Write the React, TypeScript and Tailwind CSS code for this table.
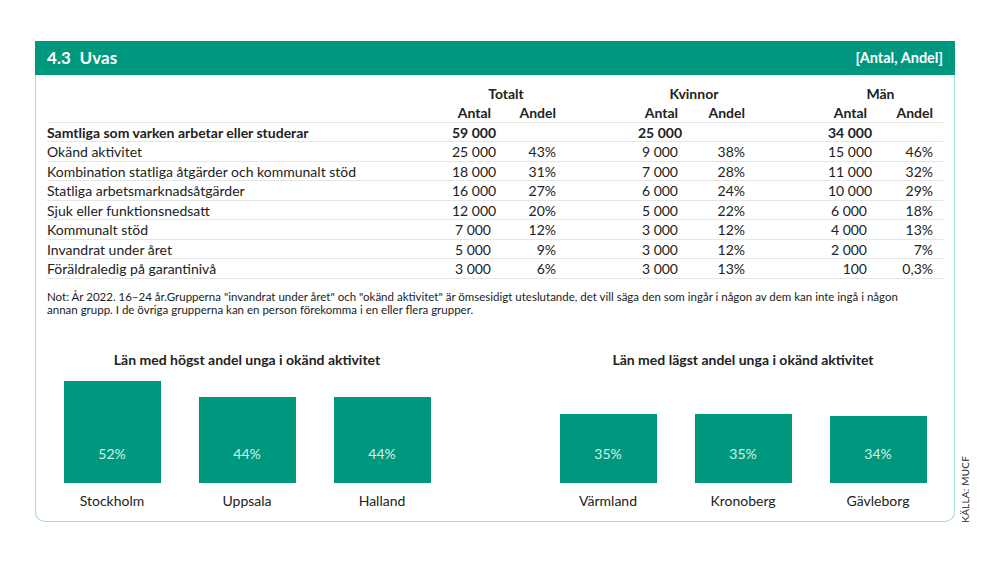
import React from "react";

const GREEN = "bg-[#00977f]";

type Row = { label: string; bold?: boolean; v: string[] };

const rows: Row[] = [
  { label: "Samtliga som varken arbetar eller studerar", bold: true, v: ["59\u00A0000", "", "25\u00A0000", "", "34\u00A0000", ""] },
  { label: "Okänd aktivitet", v: ["25\u00A0000", "43%", "9\u00A0000", "38%", "15\u00A0000", "46%"] },
  { label: "Kombination statliga åtgärder och kommunalt stöd", v: ["18\u00A0000", "31%", "7\u00A0000", "28%", "11\u00A0000", "32%"] },
  { label: "Statliga arbetsmarknadsåtgärder", v: ["16\u00A0000", "27%", "6\u00A0000", "24%", "10\u00A0000", "29%"] },
  { label: "Sjuk eller funktionsnedsatt", v: ["12\u00A0000", "20%", "5\u00A0000", "22%", "6\u00A0000", "18%"] },
  { label: "Kommunalt stöd", v: ["7\u00A0000", "12%", "3\u00A0000", "12%", "4\u00A0000", "13%"] },
  { label: "Invandrat under året", v: ["5\u00A0000", "9%", "3\u00A0000", "12%", "2\u00A0000", "7%"] },
  { label: "Föräldraledig på garantinivå", v: ["3\u00A0000", "6%", "3\u00A0000", "13%", "100", "0,3%"] },
];

const gridCols = "grid grid-cols-[405px_39px_65px_82px_40px_67px_83px_39px_66px_10px]";

function Bar({ pct, label, h }: { pct: string; label: string; h: number }) {
  return (
    <div className="flex flex-col items-center w-[97px]">
      <div className={`${GREEN} w-[97px] flex flex-col justify-end items-center pb-[19px]`} style={{ height: h }}>
        <span className="text-[14px] leading-[20px] text-[#d3f1ea]">{pct}</span>
      </div>
    </div>
  );
}

function Chart({ title, bars }: { title: string; bars: { pct: string; label: string; h: number }[] }) {
  return (
    <div className="w-[400px] flex flex-col items-center">
      <div className="h-[20px] leading-[20px] text-[14px] font-bold text-[#222]">{title}</div>
      <div className="h-[113px] flex items-end gap-[38px]">
        {bars.map((b) => (
          <Bar key={b.label} {...b} />
        ))}
      </div>
      <div className="mt-[8px] flex gap-[38px]">
        {bars.map((b) => (
          <div key={b.label} className="w-[97px] text-center text-[14px] leading-[20px] text-[#222]">
            {b.label}
          </div>
        ))}
      </div>
    </div>
  );
}

export default function App() {
  return (
    <div
      className="w-[1004px] h-[565px] bg-white pt-[41px] pl-[35px] flex items-start text-[#222]"
      style={{ fontFamily: "Lato, 'Noto Sans', sans-serif" }}
    >
      <div className="w-[920px] h-[481px] flex flex-col">
        <div className={`${GREEN} h-[34px] flex items-center justify-between px-[12px] text-white font-bold`}>
          <span className="text-[17px] leading-[20px] tracking-[0.1px]">4.3&nbsp;&nbsp;Uvas</span>
          <span className="text-[14.5px] leading-[20px]">[Antal, Andel]</span>
        </div>
        <div className="flex-1 border-x border-b border-[#a3dcd6] rounded-b-[10px] px-[11px] pt-[8.5px]">
          <div className="text-[14px] text-[#222]">
            <div className={`${gridCols} h-[19.5px] leading-[19.5px] font-bold`}>
              <div className="col-start-2 col-span-2 text-center pl-[4px]">Totalt</div>
              <div className="col-start-5 col-span-2 text-center pl-[5px]">Kvinnor</div>
              <div className="col-start-8 col-span-2 text-center">Män</div>
            </div>
            <div className={`${gridCols} h-[19.5px] leading-[19px] font-bold border-b border-[#e6e6e6]`}>
              <div className="col-start-2 text-right">Antal</div>
              <div className="col-start-3 text-right">Andel</div>
              <div className="col-start-5 text-right">Antal</div>
              <div className="col-start-6 text-right">Andel</div>
              <div className="col-start-8 text-right">Antal</div>
              <div className="col-start-9 text-right">Andel</div>
            </div>
            {rows.map((r) => (
              <div
                key={r.label}
                className={`${gridCols} h-[19.5px] leading-[19px] border-b border-[#e6e6e6] whitespace-nowrap ${r.bold ? "font-bold" : ""}`}
              >
                <div className="col-start-1">{r.label}</div>
                <div className="col-start-2 text-right">{r.v[0]}</div>
                <div className="col-start-3 text-right">{r.v[1]}</div>
                <div className="col-start-5 text-right">{r.v[2]}</div>
                <div className="col-start-6 text-right">{r.v[3]}</div>
                <div className="col-start-8 text-right">{r.v[4]}</div>
                <div className="col-start-9 text-right">{r.v[5]}</div>
              </div>
            ))}
          </div>
          <p className="mt-[11px] text-[11.5px] leading-[13px] text-[#222] whitespace-nowrap">
            Not: År 2022. 16–24 år.Grupperna "invandrat under året" och "okänd aktivitet" är ömsesidigt uteslutande, det vill säga den som ingår i någon av dem kan inte ingå i någon
            <br />
            annan grupp. I de övriga grupperna kan en person förekomma i en eller flera grupper.
          </p>
          <div className="mt-[34.5px] flex justify-between">
            <Chart
              title="Län med högst andel unga i okänd aktivitet"
              bars={[
                { pct: "52%", label: "Stockholm", h: 102 },
                { pct: "44%", label: "Uppsala", h: 86 },
                { pct: "44%", label: "Halland", h: 86 },
              ]}
            />
            <Chart
              title="Län med lägst andel unga i okänd aktivitet"
              bars={[
                { pct: "35%", label: "Värmland", h: 69 },
                { pct: "35%", label: "Kronoberg", h: 69 },
                { pct: "34%", label: "Gävleborg", h: 67 },
              ]}
            />
          </div>
        </div>
      </div>
      <div className="self-stretch flex flex-col justify-end ml-[5px] pb-[42px]">
        <span className="[writing-mode:vertical-rl] rotate-180 text-[10px] leading-[10px] text-[#222] tracking-[0.2px]">
          KÄLLA: MUCF
        </span>
      </div>
    </div>
  );
}
